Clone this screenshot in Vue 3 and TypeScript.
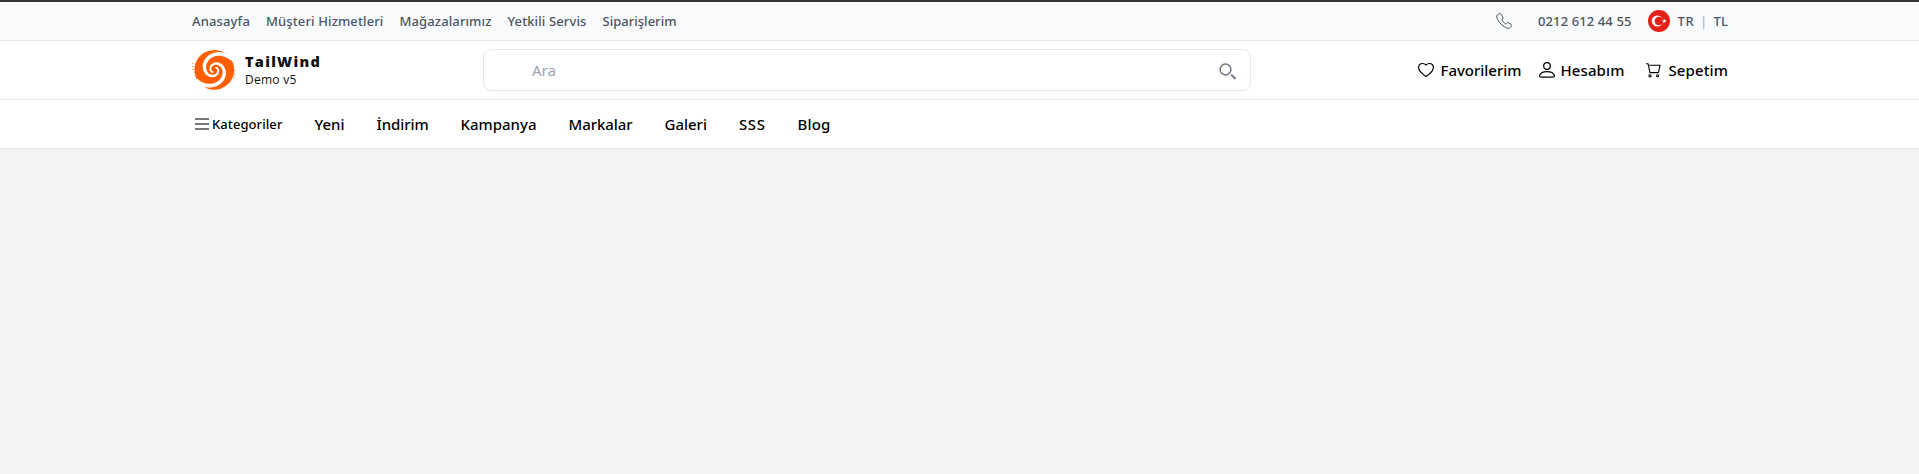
<script setup lang="ts">
import type { Directive } from 'vue'

interface Label { text: string; width: number }

const topLinks: Label[] = [
  { text: 'Anasayfa', width: 58 },
  { text: 'Müşteri Hizmetleri', width: 117.5 },
  { text: 'Mağazalarımız', width: 92 },
  { text: 'Yetkili Servis', width: 79 },
  { text: 'Siparişlerim', width: 74 },
]

const menu: Label[] = [
  { text: 'Yeni', width: 30 },
  { text: 'İndirim', width: 52 },
  { text: 'Kampanya', width: 76 },
  { text: 'Markalar', width: 64 },
  { text: 'Galeri', width: 42.5 },
  { text: 'SSS', width: 26.5 },
  { text: 'Blog', width: 33 },
]

const vFit: Directive<HTMLElement, number> = {
  mounted(el, { value }) {
    const natural = el.getBoundingClientRect().width
    const count = (el.textContent ?? '').trim().length
    el.style.letterSpacing = `${(value - natural) / count}px`
  },
}

// One tapered arm of the logo's swirl, winding in from the rim to the centre.
function swirlArm(startDegrees: number): string {
  const outer: string[] = []
  const inner: string[] = []
  for (let t = 0; t <= 400; t += 10) {
    const angle = ((startDegrees - t) * Math.PI) / 180
    const r = 21 * Math.exp(-0.0052 * t)
    const half = Math.min(1.9, 0.45 + r * 0.13)
    const at = (d: number) => `${(22.3 + d * Math.cos(angle)).toFixed(2)} ${(20.8 + d * Math.sin(angle)).toFixed(2)}`
    outer.push(at(r + half))
    inner.unshift(at(r - half))
  }
  return `M${[...outer, ...inner].join('L')}Z`
}
const arms = [swirlArm(-28), swirlArm(152)]
</script>

<template>
  <div class="page">
    <header>
      <div class="topbar">
        <div class="container">
          <nav class="top-links">
            <a v-for="link in topLinks" :key="link.text" v-fit="link.width">{{ link.text }}</a>
          </nav>
          <div class="contact">
            <svg class="phone" viewBox="0 0 16 16" width="16" height="16" fill="none" stroke="currentColor">
              <path d="M3.2.7 1.3 1.900C.4 3 .6 4.600 1.600 6.500c1.700 3.400 4.400 6.100 7.900 7.900 1.900 1 3.500 1.100 4.600.3l1.300-1.800c.3-.6.1-1.100-.4-1.500l-2.600-1.600c-.5-.3-1-.3-1.500.1l-1.300 1c-1.500-.9-2.900-2.300-3.800-3.900l1-1.200c.4-.5.4-1 .1-1.500L5 1.100C4.600.5 3.900.3 3.200.7Z" />
            </svg>
            <span v-fit="93.500" class="number">0212 612 44 55</span>
            <svg class="flag" viewBox="0 0 22 22" width="22" height="22">
              <circle cx="11" cy="11" r="11" fill="#e42119" />
              <circle cx="9.300" cy="11" r="5.600" fill="#fff" />
              <circle cx="10.900" cy="11" r="4.300" fill="#e42119" />
              <path d="m16.300 8.700.6 1.600 1.700.1-1.300 1 .4 1.600-1.400-.9-1.400.9.4-1.600-1.300-1 1.700-.1Z" fill="#fff" />
            </svg>
            <span v-fit="17" class="lang">TR</span>
            <span class="bar">|</span>
            <span v-fit="14.5" class="currency">TL</span>
          </div>
        </div>
      </div>

      <div class="mainbar">
        <div class="container">
          <a class="brand">
            <svg viewBox="0 0 44 42" width="44" height="42">
              <circle cx="22.300" cy="20.800" r="19.900" fill="#ff5e00" />
              <path v-for="arm in arms" :key="arm" :d="arm" fill="#fff" />
              <g fill="#ff5e00">
                <circle cx=".9" cy="14.500" r=".6" /><circle cx=".9" cy="17.500" r=".6" /><circle cx=".9" cy="20.500" r=".6" />
                <circle cx="43" cy="21.500" r=".6" /><circle cx="42.700" cy="25" r=".6" /><circle cx="42" cy="28.500" r=".6" />
              </g>
            </svg>
            <span class="brand-text">
              <strong><span v-fit="76">TailWind</span></strong>
              <small><span v-fit="51.500">Demo v5</span></small>
            </span>
          </a>

          <div class="search">
            <span v-fit="24">Ara</span>
            <svg viewBox="0 0 18 18" width="18" height="18" fill="none" stroke="currentColor">
              <circle cx="6.500" cy="6.500" r="5.400" stroke-width="1.500" />
              <path d="m12.200 11.700 4.300 4.300" stroke-width="1.800" />
            </svg>
          </div>

          <nav class="account">
            <a class="favorites">
              <svg viewBox="0 0 16 16" width="16" height="16" fill="none" stroke="currentColor" stroke-width="1.200" stroke-linejoin="round">
                <path d="M15.400 5.600c0-2.400-1.700-4.100-3.900-4.100-1.500 0-2.800.7-3.500 1.600-.7-.9-2-1.600-3.500-1.600C2.300 1.500.6 3.200.6 5.600c0 4.100 4.400 7 7.400 9 3-2 7.400-4.900 7.400-9Z" />
              </svg>
              <span v-fit="81">Favorilerim</span>
            </a>
            <a class="profile">
              <svg viewBox="0 0 16 16" width="16" height="16" fill="none" stroke="currentColor" stroke-width="1.250">
                <circle cx="8" cy="4" r="3.300" />
                <path d="M2 15C.7 15 .4 14.300.7 13.300 1.400 11 4 9.500 8 9.500s6.600 1.500 7.300 3.800c.3 1 0 1.700-1.300 1.700Z" />
              </svg>
              <span v-fit="64">Hesabım</span>
            </a>
            <a class="cart">
              <svg viewBox="0 0 16 16" width="16" height="16" fill="none" stroke="currentColor" stroke-width="1.100">
                <path d="M0 1.700h2l2 8.900h8.600M2.500 3.200h11.500l-1.500 7.400" />
                <circle cx="4" cy="13.800" r="1.100" /><circle cx="11.600" cy="13.800" r="1.100" />
              </svg>
              <span v-fit="59.500">Sepetim</span>
            </a>
          </nav>
        </div>
      </div>

      <div class="menubar">
        <nav class="container">
          <a class="categories">
            <svg viewBox="0 0 14 12" width="14" height="12" fill="none" stroke="#4d4d4d" stroke-width="1.700">
              <path d="M0 1h14M0 6h14M0 11h14" />
            </svg>
            <span v-fit="70.500">Kategoriler</span>
          </a>
          <a v-for="item in menu" :key="item.text" class="item"><span v-fit="item.width">{{ item.text }}</span></a>
        </nav>
      </div>
    </header>
  </div>
</template>

<style>
body { background: #f3f4f6; }
</style>

<style scoped>
.page {
  min-height: 474px;
  box-sizing: border-box;
  border-top: 2px solid #353538;
  background: #f3f4f6;
  color: #000;
  font: 500 15px/24px "Noto Sans", "Open Sans", sans-serif;
  white-space: nowrap;
}
.container {
  box-sizing: border-box;
  width: 1536px;
  height: 100%;
  margin-left: 192px;
  display: flex;
  align-items: center;
}
.topbar {
  height: 39px;
  box-sizing: border-box;
  border-bottom: 1px solid #e5e7eb;
  background: #f9fafb;
  color: #4b5563;
  font-size: 13px;
  line-height: 20px;
}
.top-links { display: flex; gap: 16px; }
.contact { display: flex; align-items: center; margin-left: auto; }
.number { margin-left: 26.5px; }
.flag { margin-left: 16px; }
.lang { margin-left: 8px; }
.bar { width: 2px; margin: 0 9px 0 8px; color: #a3b4d0; display: flex; justify-content: center; }
.mainbar {
  height: 59px;
  box-sizing: border-box;
  border-bottom: 1px solid #e5e7eb;
  background: #fff;
}
.brand { display: flex; align-items: center; width: 291px; }
.brand-text {
  display: flex;
  flex-direction: column;
  margin-left: 9px;
  color: #111;
  font-family: "Open Sans", sans-serif;
}
.brand-text strong { font-size: 14.5px; line-height: 19px; font-weight: 800; }
.brand-text small { font-size: 12px; line-height: 17px; font-weight: 400; }
.search {
  width: 768px;
  height: 42px;
  box-sizing: border-box;
  border: 1px solid #e5e7eb;
  border-radius: 8px;
  padding: 0 13px 0 48px;
  display: flex;
  align-items: center;
  justify-content: space-between;
  color: #9ca3af;
  font-weight: 400;
}
.search svg { color: #6b7280; margin-top: 4px; }
.account { display: flex; margin-left: auto; }
.account a { display: flex; align-items: center; }
.favorites svg { margin-right: 7px; }
.profile { margin-left: 17px; }
.profile svg { margin-right: 6px; }
.cart { margin-left: 21px; }
.cart svg { margin-right: 7px; }
.menubar {
  height: 49px;
  box-sizing: border-box;
  border-bottom: 1px solid #e5e7eb;
  background: #fff;
}
.categories { display: flex; align-items: center; gap: 3px; margin-left: 3px; font-size: 13px; }
.item { margin-left: 32px; }
</style>
